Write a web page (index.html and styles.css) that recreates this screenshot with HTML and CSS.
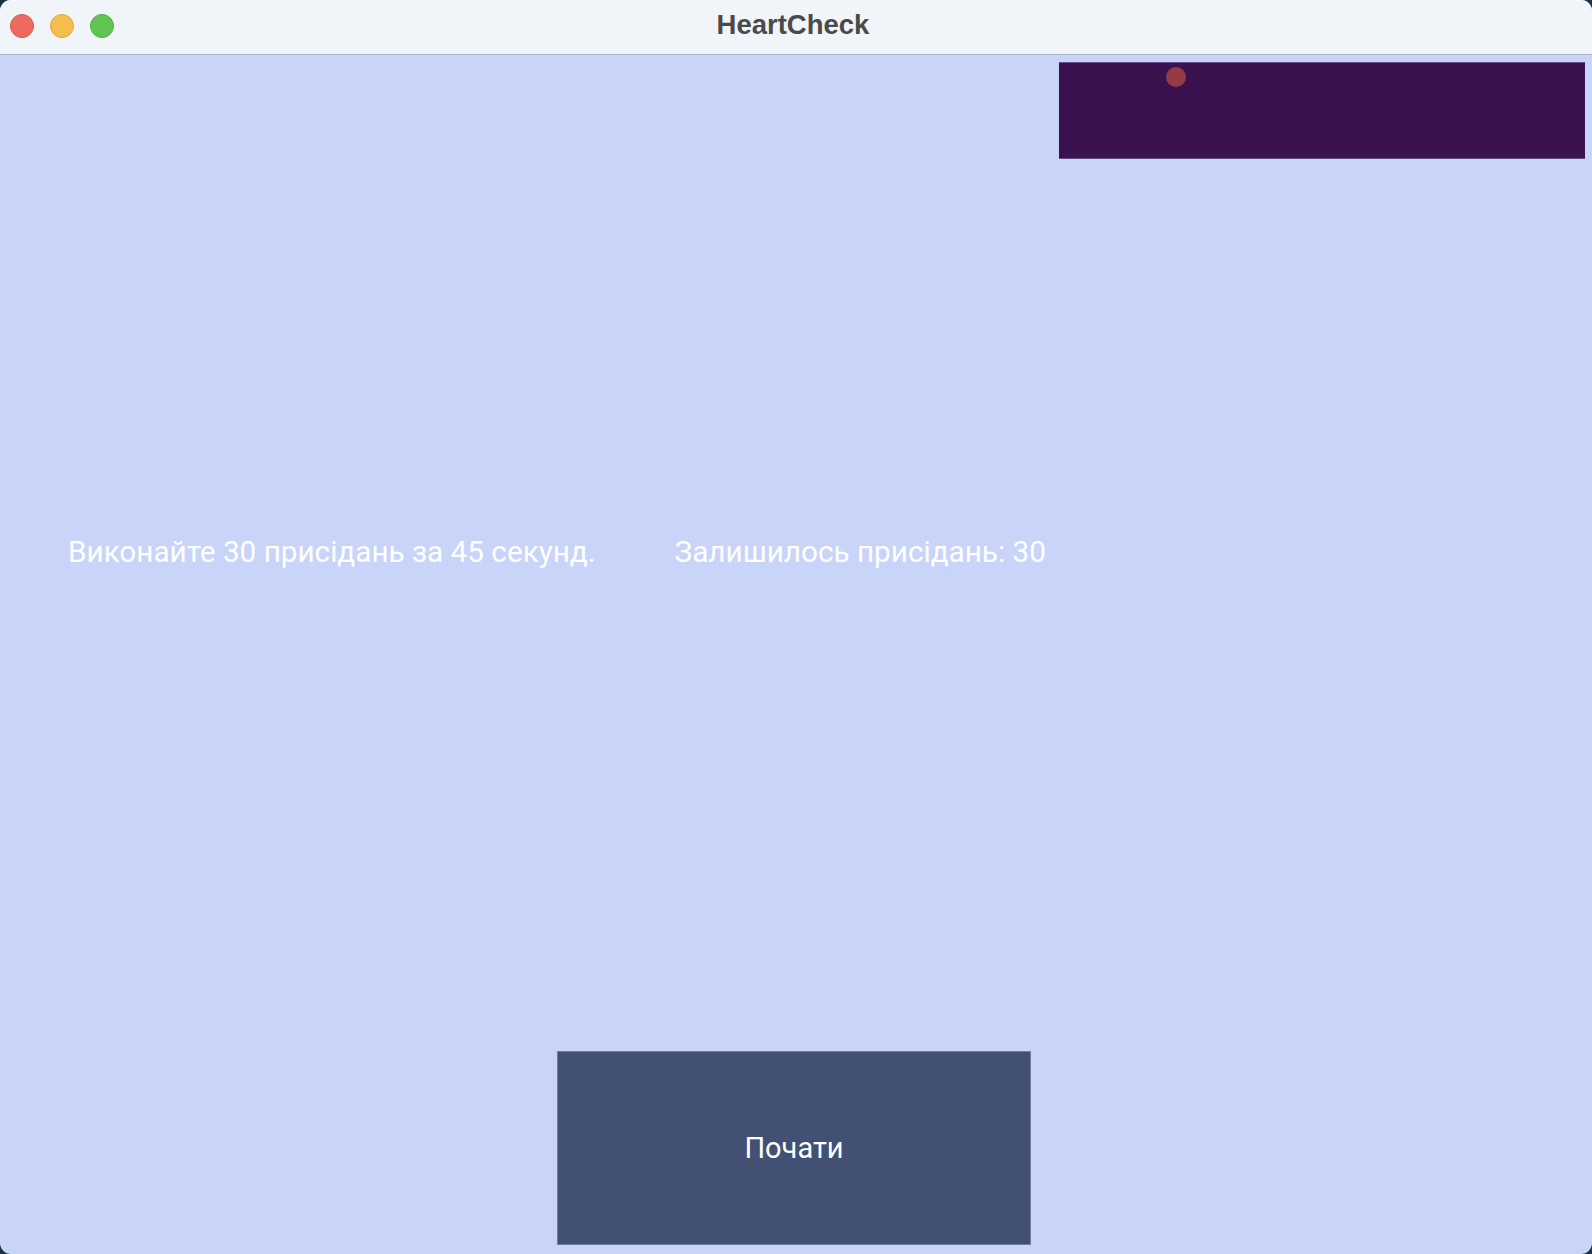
FILE: index.html
```html
<!DOCTYPE html>
<html lang="uk">
<head>
<meta charset="utf-8">
<title>HeartCheck</title>
<link rel="stylesheet" href="styles.css">
</head>
<body>
<div class="window">
  <header class="titlebar">
    <div class="lights">
      <span class="light red"></span>
      <span class="light yellow"></span>
      <span class="light green"></span>
    </div>
    <div class="title">HeartCheck</div>
  </header>
  <main class="content">
    <div class="top-row">
      <div class="panel"><span class="dot"></span></div>
    </div>
    <div class="text-row">
      <span class="label first">Виконайте 30 присідань за 45 секунд.</span>
      <span class="label second">Залишилось присідань: 30</span>
    </div>
    <div class="bottom-row">
      <button class="start">Почати</button>
    </div>
  </main>
</div>
</body>
</html>
```
FILE: styles.css
```css
* { box-sizing: border-box; }
html, body { margin: 0; padding: 0; }
body {
  width: 1592px;
  height: 1254px;
  background: #1d3140;
  overflow: hidden;
  font-family: Roboto, "Noto Sans", sans-serif;
}
.window {
  width: 1592px;
  height: 1254px;
  border-radius: 11px;
  overflow: hidden;
  background: #c8d4f8;
  display: flex;
  flex-direction: column;
}
.titlebar {
  height: 55px;
  flex: none;
  background: #f1f5f9;
  border-bottom: 1px solid #a9b1c6;
  position: relative;
  display: flex;
  align-items: center;
}
.lights {
  display: flex;
  gap: 16px;
  padding-left: 10px;
  margin-top: -3px;
}
.light {
  width: 24px;
  height: 24px;
  border-radius: 50%;
  display: block;
}
.red { background: #ed6a5e; border: 1px solid #d8574c; }
.yellow { background: #f5bf4f; border: 1px solid #dea63a; }
.green { background: #61c554; border: 1px solid #4fad43; }
.title {
  position: absolute;
  left: 0;
  right: 0;
  top: 0;
  bottom: 0;
  display: flex;
  align-items: center;
  justify-content: center;
  font-family: "Liberation Sans", Arial, sans-serif;
  font-weight: bold;
  font-size: 27.5px;
  color: #4a4a4a;
  padding: 0 6px 5px 0;
}
.content {
  flex: 1;
  display: flex;
  flex-direction: column;
}
.top-row {
  display: flex;
  justify-content: flex-end;
  padding: 7px 7px 0 0;
}
.panel {
  width: 526px;
  height: 97px;
  background: #3b1250;
  border-top: 1px solid #6a4d9a;
  border-bottom: 1px solid #5e4f78;
  position: relative;
}
.dot {
  position: absolute;
  left: 107px;
  top: 4px;
  width: 20px;
  height: 20px;
  border-radius: 50%;
  background: #963a46;
}
.text-row {
  display: flex;
  padding-left: 68px;
  margin-top: 376px;
  font-size: 29.7px;
  line-height: 34px;
  color: #ffffff;
}
.second { margin-left: 79px; }
.bottom-row {
  margin-top: auto;
  display: flex;
  justify-content: center;
  padding: 0 4px 9px 0;
}
.start {
  width: 474px;
  height: 194px;
  background: #415073;
  border: 1px solid #6f7d9f;
  color: #ffffff;
  font-family: Roboto, "Noto Sans", sans-serif;
  font-size: 29px;
  padding: 0;
  margin: 0;
}
```
